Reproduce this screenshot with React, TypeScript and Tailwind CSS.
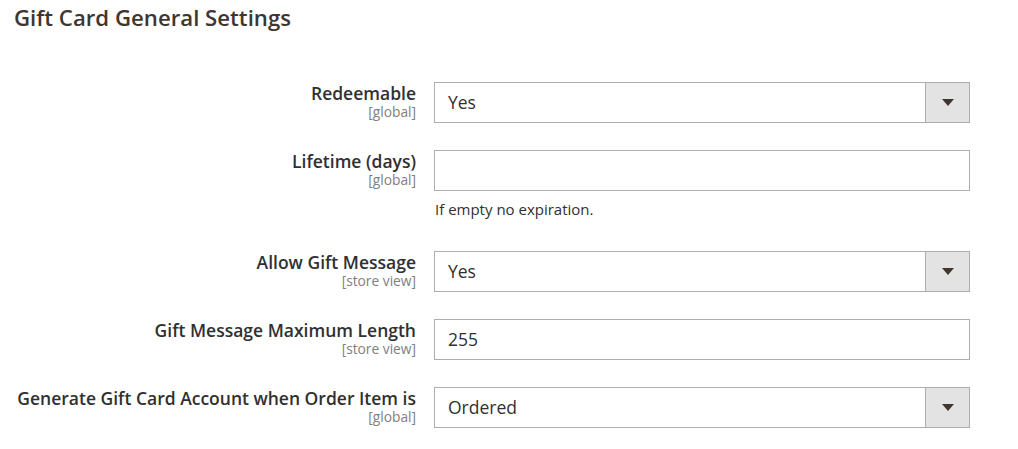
import React from "react";

interface Field {
  label: string;
  scope: string;
  value: string;
  type: "select" | "text";
  note?: string;
}

const fields: Field[] = [
  { label: "Redeemable", scope: "[global]", value: "Yes", type: "select" },
  { label: "Lifetime (days)", scope: "[global]", value: "", type: "text", note: "If empty no expiration." },
  { label: "Allow Gift Message", scope: "[store view]", value: "Yes", type: "select" },
  { label: "Gift Message Maximum Length", scope: "[store view]", value: "255", type: "text" },
  { label: "Generate Gift Card Account when Order Item is", scope: "[global]", value: "Ordered", type: "select" },
];

const SelectBox: React.FC<{ value: string }> = ({ value }) => (
  <div className="flex h-[41px] w-[536px] border border-[#adadad] bg-white">
    <div className="flex flex-1 items-center pl-[13px] text-[17.5px] text-[#303030]">{value}</div>
    <div className="flex w-[44px] items-center justify-center border-l border-[#adadad] bg-[#e3e3e3]">
      <svg width="12" height="8" viewBox="0 0 12 8">
        <path d="M0 0 H12 L6 7 Z" fill="#41362f" />
      </svg>
    </div>
  </div>
);

const TextBox: React.FC<{ value: string }> = ({ value }) => (
  <div className="flex h-[41px] w-[536px] items-center border border-[#adadad] bg-white pl-[13px] text-[17.5px] text-[#303030]">
    {value}
  </div>
);

export default function App() {
  return (
    <div className="min-h-[449px] w-[1018px] bg-white" style={{ fontFamily: '"Open Sans", sans-serif' }}>
      <h2 className="pl-[14px] pt-[3px] text-[22.2px] font-semibold leading-[30px] text-[#41362f]">
        Gift Card General Settings
      </h2>
      <div className="mt-[49px] flex flex-col gap-[27px]">
        {fields.map((f) => (
          <div key={f.label} className="flex">
            <div className="flex h-[41px] w-[416px] flex-col items-end">
              <div className="text-[17.5px] font-semibold leading-[22px] text-[#303030]">{f.label}</div>
              <div className="text-[13.75px] leading-[16px] text-[#808080]">{f.scope}</div>
            </div>
            <div className="ml-[18px]">
              {f.type === "select" ? <SelectBox value={f.value} /> : <TextBox value={f.value} />}
              {f.note && (
                <div className="mb-[5px] mt-[8px] pl-[1px] text-[15px] leading-[20px] text-[#303030]">{f.note}</div>
              )}
            </div>
          </div>
        ))}
      </div>
    </div>
  );
}
